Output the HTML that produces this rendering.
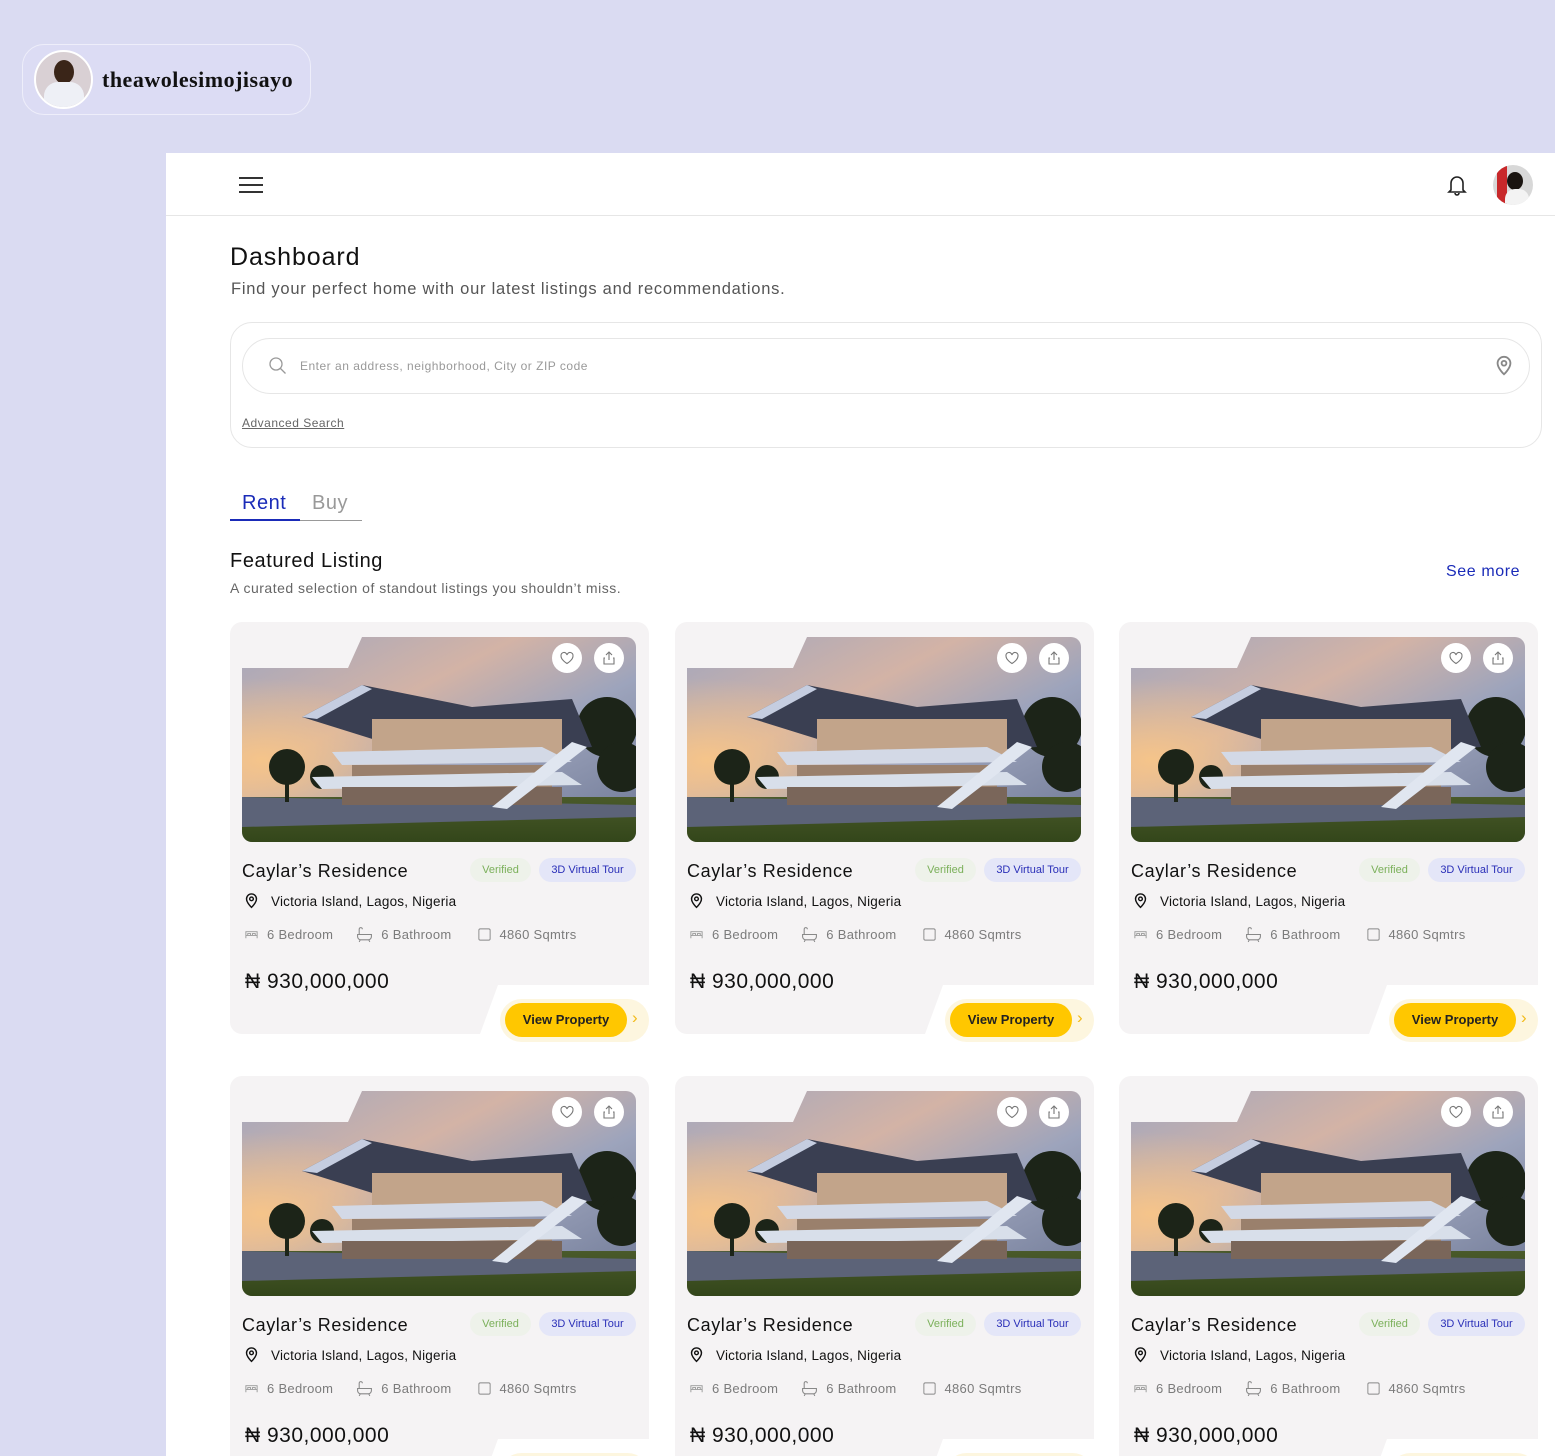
<!DOCTYPE html>
<html style="width:1555px;height:1456px;overflow:hidden"><head><meta charset="utf-8"><style>
*{margin:0;padding:0;box-sizing:border-box}
body{width:1555px;height:1456px;overflow:hidden;background:#dadbf2;font-family:"Liberation Sans",sans-serif;position:relative;color:#111}
.abs{position:absolute}
.main{position:absolute;left:166px;top:153px;width:1389px;height:1303px;background:#fff}
.card{position:absolute;width:419px;height:420px}
.cbg{position:absolute;left:0;top:0;width:419px;height:412px;background:#f5f3f4;border-radius:12px;clip-path:polygon(0 0,419px 0,419px 363px,268px 363px,250px 412px,0 412px)}
.img{position:absolute;left:12px;top:15px;width:394px;height:205px;border-radius:10px;overflow:hidden;clip-path:polygon(0 31px,106px 31px,120px 0,394px 0,394px 205px,0 205px)}
.circ{position:absolute;top:21px;width:30px;height:30px;border-radius:50%;background:#fff;display:flex;align-items:center;justify-content:center}
.title{position:absolute;left:12px;top:239px;font-size:18px;letter-spacing:.6px}
.b1{position:absolute;left:240px;top:236px;width:61px;height:24px;border-radius:12px;background:#eef2ea;color:#7bb05a;font-size:11px;text-align:center;line-height:24px}
.b2{position:absolute;left:309px;top:236px;width:97px;height:24px;border-radius:12px;background:#e4e6f8;color:#2a2fb8;font-size:11px;text-align:center;line-height:24px}
.loc{position:absolute;left:13px;top:270px;font-size:13.5px;display:flex;align-items:center;gap:11px;letter-spacing:.2px}
.stats{position:absolute;left:14px;top:304px;font-size:13px;color:#7b7b7b;display:flex;align-items:center;letter-spacing:.3px}
.stats span{display:flex;align-items:center;gap:8px}
.price{position:absolute;left:15px;top:348px;font-size:21px;letter-spacing:.5px}
.pill{position:absolute;left:270px;top:377px;width:149px;height:43px;border-radius:22px;background:#fdf6df}
.btn{position:absolute;left:275px;top:381px;width:122px;height:34px;border-radius:17px;background:#ffc700;font-size:13px;text-align:center;line-height:34px;font-weight:bold;color:#222}
.arr{position:absolute;left:402px;top:386px;color:#f2bb1a;font-size:17px}
</style></head><body>
<svg width="0" height="0" style="position:absolute"><defs>
<linearGradient id="sky" x1="0" y1="0" x2="1" y2="1"><stop offset="0" stop-color="#a3a7bd"/><stop offset=".35" stop-color="#d3b3a6"/><stop offset=".6" stop-color="#9da4bc"/><stop offset="1" stop-color="#6d7794"/></linearGradient>
<linearGradient id="gr" x1="0" y1="0" x2="0" y2="1"><stop offset="0" stop-color="#4a5a2a"/><stop offset="1" stop-color="#33461a"/></linearGradient>
<radialGradient id="sun" cx=".05" cy=".6" r=".4"><stop offset="0" stop-color="#f5c48a"/><stop offset="1" stop-color="#f5c48a" stop-opacity="0"/></radialGradient>
<symbol id="house" viewBox="0 0 394 205">
<rect width="394" height="205" fill="url(#sky)"/><rect width="394" height="205" fill="url(#sun)"/>
<rect y="160" width="394" height="45" fill="url(#gr)"/>
<polygon points="0,160 394,168 394,180 0,190" fill="#5c6378"/>
<g fill="#1c2418"><circle cx="45" cy="130" r="18"/><rect x="43" y="135" width="4" height="30"/><circle cx="80" cy="140" r="12"/><circle cx="365" cy="90" r="30"/><circle cx="380" cy="130" r="25"/></g>
<polygon points="60,80 120,48 230,70 330,62 350,110 320,112 140,105" fill="#3a3f52"/>
<polygon points="60,80 120,48 130,52 75,82" fill="#c5cde0"/>
<rect x="130" y="82" width="190" height="35" fill="#c2a48a"/>
<polygon points="90,115 300,110 330,125 100,128" fill="#d3d9e6"/>
<rect x="110" y="128" width="200" height="30" fill="#9a806c"/>
<polygon points="70,140 320,135 340,148 80,152" fill="#d8dfea"/>
<rect x="100" y="150" width="220" height="18" fill="#7a665a"/>
<polygon points="250,170 330,105 345,110 265,172" fill="#e0e6f0"/>
</symbol>
<symbol id="pin" viewBox="0 0 24 24"><path d="M12 21s-7-6.5-7-12a7 7 0 0 1 14 0c0 5.5-7 12-7 12z" fill="none" stroke="currentColor" stroke-width="2"/><circle cx="12" cy="9" r="2.6" fill="none" stroke="currentColor" stroke-width="2"/></symbol>
<symbol id="heart" viewBox="0 0 16 16"><path d="M8 13.5S2 10 2 6a3 3 0 0 1 6-1 3 3 0 0 1 6 1c0 4-6 7.5-6 7.5z" fill="none" stroke="#777" stroke-width="1.1"/></symbol>
<symbol id="share" viewBox="0 0 16 16"><path d="M8 2v8M5 5l3-3 3 3M4 8H3v6h10V8h-1" fill="none" stroke="#777" stroke-width="1.1"/></symbol>
<symbol id="bed" viewBox="0 0 16 16"><path d="M2 12V5h12v7M2 9h12M4 9V7h3v2M9 9V7h3v2" fill="none" stroke="#999" stroke-width="1"/></symbol>
<symbol id="bath" viewBox="0 0 16 16"><path d="M3 8V3a1.5 1.5 0 0 1 3 0M1.5 8h13v2a3 3 0 0 1-3 3h-7a3 3 0 0 1-3-3zM4 13l-1 2M12 13l1 2" fill="none" stroke="#888" stroke-width="1"/></symbol>
<symbol id="sq" viewBox="0 0 16 16"><rect x="2" y="2" width="12" height="12" rx="1.5" fill="none" stroke="#888" stroke-width="1"/></symbol>
</defs></svg>

<div class="abs" style="left:22px;top:44px;width:289px;height:71px;border-radius:22px;background:#dcdcf4;border:1px solid #eeeefa"></div>
<div class="abs" style="left:34px;top:50px;width:59px;height:59px;border-radius:50%;background:#d9d0d4;border:2px solid #fff;overflow:hidden"><div style="position:absolute;left:18px;top:8px;width:20px;height:24px;border-radius:50%;background:#3a2518"></div><div style="position:absolute;left:8px;top:30px;width:40px;height:30px;border-radius:14px 14px 0 0;background:#eef0f6"></div></div>
<div class="abs" style="left:102px;top:67px;font-family:'Liberation Serif',serif;font-size:22px;font-weight:bold;letter-spacing:.5px">theawolesimojisayo</div>

<div class="main">
<div class="abs" style="left:0;top:62px;width:1389px;height:1px;background:#e6e6e6"></div>
<div class="abs" style="left:73px;top:24px;width:24px;height:2px;background:#333;box-shadow:0 7px 0 #333,0 14px 0 #333"></div>
<svg class="abs" style="left:1280px;top:20px" width="22" height="24" viewBox="0 0 22 24"><path d="M5 17V10a6 6 0 0 1 12 0v7l2 2H3z M9 20a2 2 0 0 0 4 0" fill="none" stroke="#222" stroke-width="1.6"/></svg>
<div class="abs" style="left:1327px;top:12px;width:40px;height:40px;border-radius:50%;background:#d8d8d8;overflow:hidden"><div style="position:absolute;left:4px;top:0;width:10px;height:40px;background:#c8282a"></div><div style="position:absolute;left:14px;top:7px;width:16px;height:18px;border-radius:50%;background:#1a1410"></div><div style="position:absolute;left:12px;top:24px;width:24px;height:18px;border-radius:10px 10px 0 0;background:#f3f3f3"></div></div>

<div class="abs" style="left:64px;top:90px;font-size:25px;letter-spacing:.9px">Dashboard</div>
<div class="abs" style="left:65px;top:127px;font-size:16.5px;color:#555;letter-spacing:.75px">Find your perfect home with our latest listings and recommendations.</div>

<div class="abs" style="left:64px;top:169px;width:1312px;height:126px;border:1px solid #e6e6e6;border-radius:22px"></div>
<div class="abs" style="left:76px;top:185px;width:1288px;height:56px;border:1px solid #e6e6e6;border-radius:28px"></div>
<svg class="abs" style="left:102px;top:203px" width="20" height="20" viewBox="0 0 20 20"><circle cx="8" cy="8" r="6" fill="none" stroke="#999" stroke-width="1.3"/><path d="M12.5 12.5l5 5" stroke="#999" stroke-width="1.3"/></svg>
<div class="abs" style="left:134px;top:206px;font-size:12px;color:#999;letter-spacing:.5px">Enter an address, neighborhood, City or ZIP code</div>
<svg class="abs" style="left:1327px;top:201px;color:#888" width="22" height="24"><use href="#pin" width="22" height="24"/></svg>
<div class="abs" style="left:76px;top:263px;font-size:12px;color:#666;text-decoration:underline;letter-spacing:.5px">Advanced Search</div>

<div class="abs" style="left:76px;top:339px;font-size:20px;color:#1a2bb8;letter-spacing:.5px">Rent</div>
<div class="abs" style="left:146px;top:339px;font-size:20px;color:#999;letter-spacing:.5px">Buy</div>
<div class="abs" style="left:64px;top:367px;width:132px;height:1px;background:#999"></div>
<div class="abs" style="left:64px;top:366px;width:70px;height:2px;background:#1a2bb8"></div>

<div class="abs" style="left:64px;top:397px;font-size:20px;letter-spacing:.6px">Featured Listing</div>
<div class="abs" style="left:64px;top:427px;font-size:14px;color:#666;letter-spacing:.5px">A curated selection of standout listings you shouldn’t miss.</div>
<div class="abs" style="left:1280px;top:410px;font-size:16px;color:#1a2bb8;letter-spacing:.6px">See more</div>
</div>

<div class="card" style="left:230px;top:622px"><div class="cbg"></div><div class="img"><svg width="394" height="205"><use href="#house"/></svg></div><div class="circ" style="left:322px"><svg width="16" height="16"><use href="#heart"/></svg></div><div class="circ" style="left:364px"><svg width="16" height="16"><use href="#share"/></svg></div><div class="title">Caylar’s Residence</div><div class="b1">Verified</div><div class="b2">3D Virtual Tour</div><div class="loc"><svg width="17" height="18"><use href="#pin" width="17" height="18"/></svg>Victoria Island, Lagos, Nigeria</div><div class="stats"><span><svg width="15" height="15"><use href="#bed"/></svg>6 Bedroom</span><span style="margin-left:23px"><svg width="17" height="17"><use href="#bath"/></svg>6 Bathroom</span><span style="margin-left:25px"><svg width="15" height="15"><use href="#sq"/></svg>4860 Sqmtrs</span></div><div class="price">₦ 930,000,000</div><div class="pill"></div><div class="btn">View Property</div><div class="arr">›</div></div>
<div class="card" style="left:675px;top:622px"><div class="cbg"></div><div class="img"><svg width="394" height="205"><use href="#house"/></svg></div><div class="circ" style="left:322px"><svg width="16" height="16"><use href="#heart"/></svg></div><div class="circ" style="left:364px"><svg width="16" height="16"><use href="#share"/></svg></div><div class="title">Caylar’s Residence</div><div class="b1">Verified</div><div class="b2">3D Virtual Tour</div><div class="loc"><svg width="17" height="18"><use href="#pin" width="17" height="18"/></svg>Victoria Island, Lagos, Nigeria</div><div class="stats"><span><svg width="15" height="15"><use href="#bed"/></svg>6 Bedroom</span><span style="margin-left:23px"><svg width="17" height="17"><use href="#bath"/></svg>6 Bathroom</span><span style="margin-left:25px"><svg width="15" height="15"><use href="#sq"/></svg>4860 Sqmtrs</span></div><div class="price">₦ 930,000,000</div><div class="pill"></div><div class="btn">View Property</div><div class="arr">›</div></div>
<div class="card" style="left:1119px;top:622px"><div class="cbg"></div><div class="img"><svg width="394" height="205"><use href="#house"/></svg></div><div class="circ" style="left:322px"><svg width="16" height="16"><use href="#heart"/></svg></div><div class="circ" style="left:364px"><svg width="16" height="16"><use href="#share"/></svg></div><div class="title">Caylar’s Residence</div><div class="b1">Verified</div><div class="b2">3D Virtual Tour</div><div class="loc"><svg width="17" height="18"><use href="#pin" width="17" height="18"/></svg>Victoria Island, Lagos, Nigeria</div><div class="stats"><span><svg width="15" height="15"><use href="#bed"/></svg>6 Bedroom</span><span style="margin-left:23px"><svg width="17" height="17"><use href="#bath"/></svg>6 Bathroom</span><span style="margin-left:25px"><svg width="15" height="15"><use href="#sq"/></svg>4860 Sqmtrs</span></div><div class="price">₦ 930,000,000</div><div class="pill"></div><div class="btn">View Property</div><div class="arr">›</div></div>
<div class="card" style="left:230px;top:1076px"><div class="cbg"></div><div class="img"><svg width="394" height="205"><use href="#house"/></svg></div><div class="circ" style="left:322px"><svg width="16" height="16"><use href="#heart"/></svg></div><div class="circ" style="left:364px"><svg width="16" height="16"><use href="#share"/></svg></div><div class="title">Caylar’s Residence</div><div class="b1">Verified</div><div class="b2">3D Virtual Tour</div><div class="loc"><svg width="17" height="18"><use href="#pin" width="17" height="18"/></svg>Victoria Island, Lagos, Nigeria</div><div class="stats"><span><svg width="15" height="15"><use href="#bed"/></svg>6 Bedroom</span><span style="margin-left:23px"><svg width="17" height="17"><use href="#bath"/></svg>6 Bathroom</span><span style="margin-left:25px"><svg width="15" height="15"><use href="#sq"/></svg>4860 Sqmtrs</span></div><div class="price">₦ 930,000,000</div><div class="pill"></div><div class="btn">View Property</div><div class="arr">›</div></div>
<div class="card" style="left:675px;top:1076px"><div class="cbg"></div><div class="img"><svg width="394" height="205"><use href="#house"/></svg></div><div class="circ" style="left:322px"><svg width="16" height="16"><use href="#heart"/></svg></div><div class="circ" style="left:364px"><svg width="16" height="16"><use href="#share"/></svg></div><div class="title">Caylar’s Residence</div><div class="b1">Verified</div><div class="b2">3D Virtual Tour</div><div class="loc"><svg width="17" height="18"><use href="#pin" width="17" height="18"/></svg>Victoria Island, Lagos, Nigeria</div><div class="stats"><span><svg width="15" height="15"><use href="#bed"/></svg>6 Bedroom</span><span style="margin-left:23px"><svg width="17" height="17"><use href="#bath"/></svg>6 Bathroom</span><span style="margin-left:25px"><svg width="15" height="15"><use href="#sq"/></svg>4860 Sqmtrs</span></div><div class="price">₦ 930,000,000</div><div class="pill"></div><div class="btn">View Property</div><div class="arr">›</div></div>
<div class="card" style="left:1119px;top:1076px"><div class="cbg"></div><div class="img"><svg width="394" height="205"><use href="#house"/></svg></div><div class="circ" style="left:322px"><svg width="16" height="16"><use href="#heart"/></svg></div><div class="circ" style="left:364px"><svg width="16" height="16"><use href="#share"/></svg></div><div class="title">Caylar’s Residence</div><div class="b1">Verified</div><div class="b2">3D Virtual Tour</div><div class="loc"><svg width="17" height="18"><use href="#pin" width="17" height="18"/></svg>Victoria Island, Lagos, Nigeria</div><div class="stats"><span><svg width="15" height="15"><use href="#bed"/></svg>6 Bedroom</span><span style="margin-left:23px"><svg width="17" height="17"><use href="#bath"/></svg>6 Bathroom</span><span style="margin-left:25px"><svg width="15" height="15"><use href="#sq"/></svg>4860 Sqmtrs</span></div><div class="price">₦ 930,000,000</div><div class="pill"></div><div class="btn">View Property</div><div class="arr">›</div></div>
</body></html>
